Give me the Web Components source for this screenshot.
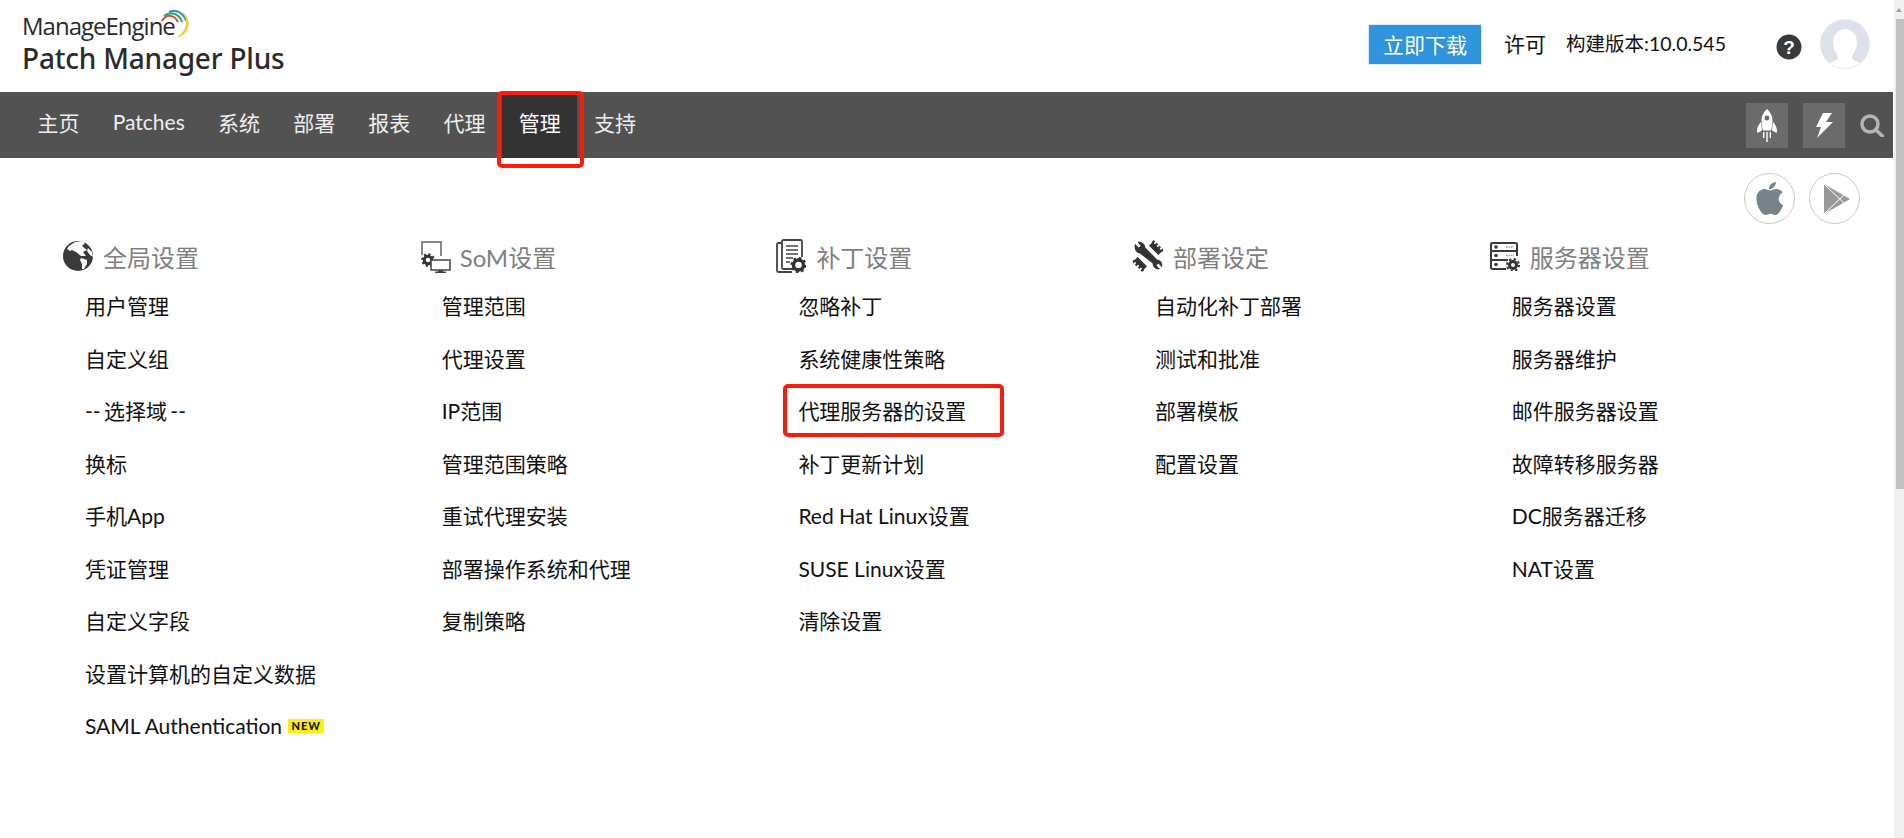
<!DOCTYPE html>
<html>
<head>
<meta charset="utf-8">
<title>Patch Manager Plus</title>
<style>
html,body{margin:0;padding:0;background:#fff;overflow:hidden;}
body{font-family:Lato,"Noto Sans CJK SC",sans-serif;}
</style>
</head>
<body>
<pm-app>
  <pm-header slot="header"></pm-header>
  <pm-nav slot="nav">
    <pm-nav-item>主页</pm-nav-item>
    <pm-nav-item>Patches</pm-nav-item>
    <pm-nav-item>系统</pm-nav-item>
    <pm-nav-item>部署</pm-nav-item>
    <pm-nav-item>报表</pm-nav-item>
    <pm-nav-item>代理</pm-nav-item>
    <pm-nav-item active>管理</pm-nav-item>
    <pm-nav-item>支持</pm-nav-item>
  </pm-nav>
  <pm-store-links slot="store"></pm-store-links>
  <pm-settings slot="settings">
    <pm-col heading="全局设置">
      <svg slot="icon" viewBox="0 0 30 30" width="30" height="30"><circle cx="15" cy="15" r="15" fill="#3a3a3a"/><path d="M6 5l6-4 7-1 3 2-3 3 5 4-4 2 3 4-5 0-5-4-4-2-2 1-3-2zM18 17l6 2 0 4-3 5-2 0 0-5-2-4zM25 7l4 4 1 5-3-2-3-4z" fill="#fff"/></svg>
      <pm-link>用户管理</pm-link><pm-link>自定义组</pm-link><pm-link><span style="word-spacing:-2px">-- 选择域 --</span></pm-link><pm-link>换标</pm-link><pm-link>手机App</pm-link><pm-link>凭证管理</pm-link><pm-link>自定义字段</pm-link><pm-link>设置计算机的自定义数据</pm-link><pm-link>SAML Authentication <pm-new></pm-new></pm-link>
    </pm-col>
    <pm-col heading="SoM设置">
      <svg slot="icon" viewBox="0 0 34 34" width="34" height="34" style="margin-left:-3px;margin-right:-1px"><path d="M5 16V3h19v14" fill="none" stroke="#666" stroke-width="1.5"/><circle cx="11" cy="21" r="3.800" fill="none" stroke="#333" stroke-width="3"/><circle cx="11" cy="21" r="5.800" fill="none" stroke="#333" stroke-width="2" stroke-dasharray="2.200 2.300"/><rect x="14" y="21" width="19" height="10" fill="#fff" stroke="#444" stroke-width="1.5"/><path d="M21 31h5v1.500h3V34H18v-1.500h3z" fill="#444"/></svg>
      <pm-link>管理范围</pm-link><pm-link>代理设置</pm-link><pm-link>IP范围</pm-link><pm-link>管理范围策略</pm-link><pm-link>重试代理安装</pm-link><pm-link>部署操作系统和代理</pm-link><pm-link>复制策略</pm-link>
    </pm-col>
    <pm-col heading="补丁设置">
      <svg slot="icon" viewBox="0 0 30 34" width="30" height="34"><path d="M6 4H2.500A1.500 1.500 0 0 0 1 5.500v26A1.500 1.500 0 0 0 2.500 33H16" fill="none" stroke="#444" stroke-width="1.800"/><path d="M16 30H7.500A1.500 1.500 0 0 1 6 28.500V2.500A1.500 1.500 0 0 1 7.500 1h17A1.500 1.500 0 0 1 26 2.500V18" fill="#fff" stroke="#444" stroke-width="1.800"/><path d="M10 7h12M10 11h12M10 15h12M10 19h7M10 23h4" stroke="#444" stroke-width="1.500"/><circle cx="22.500" cy="26" r="5" fill="none" stroke="#333" stroke-width="3.500"/><circle cx="22.500" cy="26" r="7" fill="none" stroke="#333" stroke-width="2.200" stroke-dasharray="2.600 2.900"/></svg>
      <pm-link>忽略补丁</pm-link><pm-link>系统健康性策略</pm-link><pm-link>代理服务器的设置</pm-link><pm-link>补丁更新计划</pm-link><pm-link>Red Hat Linux设置</pm-link><pm-link>SUSE Linux设置</pm-link><pm-link>清除设置</pm-link>
    </pm-col>
    <pm-col heading="部署设定">
      <svg slot="icon" viewBox="0 0 32 32" width="32" height="32"><path fill="#333" d="M2 3l4 4 2-2-3-4c4-1 8 2 8 6L26 20c3 0 6 3 5 8l-4-4-2 2 4 4c-5 1-8-2-8-6L7 13C3 13 1 8 2 3z"/><g fill="none" stroke="#333"><path d="M19 3l10 10M3 19l10 10" stroke-width="5.500"/><path d="M21 0l11 11M0 21l11 11" stroke-width="3" stroke-dasharray="2.500 1.800"/></g></svg>
      <pm-link>自动化补丁部署</pm-link><pm-link>测试和批准</pm-link><pm-link>部署模板</pm-link><pm-link>配置设置</pm-link>
    </pm-col>
    <pm-col heading="服务器设置">
      <svg slot="icon" viewBox="0 0 30 30" width="30" height="30"><path d="M16 28H2.500A1.500 1.500 0 0 1 1 26.500v-23A1.500 1.500 0 0 1 2.500 2h23A1.500 1.500 0 0 1 27 3.500V15" fill="none" stroke="#3a3a3a" stroke-width="2"/><path d="M1 10h26M1 19h17" stroke="#3a3a3a" stroke-width="2"/><circle cx="6" cy="6" r="1.800" fill="#3a3a3a"/><circle cx="6" cy="14.500" r="1.800" fill="#3a3a3a"/><circle cx="6" cy="23.500" r="1.800" fill="#3a3a3a"/><path d="M16 6h8M16 14.500h8" stroke="#999" stroke-width="1.500" stroke-dasharray="1.500 1"/><circle cx="23" cy="24" r="3.500" fill="none" stroke="#333" stroke-width="3"/><circle cx="23" cy="24" r="6" fill="none" stroke="#333" stroke-width="2" stroke-dasharray="2.300 2.400"/></svg>
      <pm-link>服务器设置</pm-link><pm-link>服务器维护</pm-link><pm-link>邮件服务器设置</pm-link><pm-link>故障转移服务器</pm-link><pm-link>DC服务器迁移</pm-link><pm-link>NAT设置</pm-link>
    </pm-col>
  </pm-settings>
  <pm-mark slot="marks" style="left:497px;top:91px;width:87px;height:77px"></pm-mark>
  <pm-mark slot="marks" style="left:783px;top:384px;width:221px;height:53px"></pm-mark>
</pm-app>

<script>
let def= (name, html)=> {
  customElements.define(name, class extends HTMLElement{
    constructor(){
      super();
      this.attachShadow({mode:"open"}).innerHTML= typeof html=="function" ? html(this) : html;
    }
  });
};

const CJK= `Lato,"Noto Sans CJK SC",sans-serif`;

def("pm-app", `<style>
:host{display:flex;width:1904px;height:838px;position:relative;overflow:hidden;background:#fff;}
main{width:1893px;flex:none;display:flex;flex-direction:column;}
aside{margin-left:1px;width:10px;background:#f0f0f0;position:relative;flex:none;}
.arrow{height:19px;display:flex;justify-content:center;align-items:center;}
.arrow i{display:block;border:3px solid transparent;border-bottom:4px solid #a3a3a3;border-top:0;}
.thumb{height:470px;margin-left:2px;background:#c1c1c1;}
</style>
<main>
<slot name="header"></slot>
<slot name="nav"></slot>
<slot name="store"></slot>
<slot name="settings"></slot>
</main>
<aside><div class="arrow"><i></i></div><div class="thumb"></div></aside>
<slot name="marks"></slot>`);

def("pm-mark", `<style>
:host{display:block;position:absolute;box-sizing:border-box;border:4px solid #ff1a0e;border-radius:5px;}
</style>`);

def("pm-header", `<style>
:host{display:flex;height:92px;align-items:flex-start;font-family:${CJK};color:#111;}
.logo{margin:10px 0 0 22px;position:relative;color:#2b2b2b;width:300px;}
.me{font:400 24px/30px "Open Sans",sans-serif;letter-spacing:-1px;height:30px;padding-top:1px;}
.me svg{position:absolute;left:137px;top:0;}
.pm{font:500 28px/34px "Noto Sans",sans-serif;letter-spacing:-.2px;white-space:nowrap;}
.right{margin-left:auto;display:flex;align-items:center;height:42px;margin-top:23px;}
.btn{width:114px;height:41px;background:#3095dc;color:#fff;font-size:21px;display:flex;align-items:center;justify-content:center;box-sizing:border-box;border:1px solid #dcebf7;}
.lic{margin:-3px 0 0 22px;font-size:21px;}
.ver{margin:-3px 0 0 20px;font-size:19.5px;}
.help{margin:5px 0 0 50px;}
.ava{margin:0 23px 0 18px;}
</style>
<div class="logo"><div class="me">ManageEngine<svg width="32" height="30" viewBox="0 0 32 30" fill="none"><path d="M3 11C7 4 15 4 19 12" stroke="#d9473a" stroke-width="2"/><path d="M5 6C11 1 20 3 23 12" stroke="#2fa866" stroke-width="2.200"/><path d="M10 2C17-1 25 3 27 11" stroke="#2b8fd0" stroke-width="2.200"/><path d="M22 1C29 5 32 14 28 20 26 24 22 27 17 28 23 24 27 19 27 13 27 8 25 4 22 1z" fill="#f4cf2e"/></svg></div><div class="pm">Patch Manager Plus</div></div>
<div class="right">
<div class="btn">立即下载</div>
<div class="lic">许可</div>
<div class="ver">构建版本:10.0.545</div>
<svg class="help" width="26" height="26" viewBox="0 0 26 26"><circle cx="13" cy="13" r="12.500" fill="#3a3a3a"/><text x="13" y="20" text-anchor="middle" fill="#fff" font-family="Liberation Sans" font-weight="700" font-size="19">?</text></svg>
<svg class="ava" width="50" height="50" viewBox="0 0 50 50"><defs><clipPath id="c"><circle cx="25" cy="25" r="24.500"/></clipPath></defs><circle cx="25" cy="25" r="24.500" fill="#fff"/><g clip-path="url(#c)"><path fill="#dce1ec" d="M0 0h50v50H44c0-8-12-7-12-12 0-2 5-7 5-14 0-9-6-14-12-14S13 15 13 24c0 7 5 12 5 14 0 5-12 4-12 12H0z"/></g><circle cx="25" cy="25" r="24.500" fill="none" stroke="#e6e8ee"/></svg>
</div>`);

def("pm-nav", `<style>
:host{display:flex;height:66px;background:#525252;padding-left:21px;align-items:stretch;}
.tools{margin-left:auto;display:flex;align-items:center;gap:15px;padding-right:9px;}
.tool{width:42px;height:45px;background:#6b6b6b;display:flex;align-items:center;justify-content:center;}
</style>
<slot></slot>
<div class="tools">
<div class="tool"><svg width="20" height="33" viewBox="0 0 20 33" fill="#fff"><path fill-rule="evenodd" d="M10 0c3.500 3 5.500 7 5.500 11.500 0 3.500-.5 7-1.500 10H6c-1-3-1.500-6.500-1.500-10C4.500 7 6.500 3 10 0zm0 6.500a2.500 2.500 0 1 0 0 5 2.500 2.500 0 0 0 0-5z"/><path d="M4 13c-2 2-4 5-4 9l.5 2 4.500-2.500zM16 13c2 2 4 5 4 9l-.5 2-4.500-2.500zM9.300 23h1.400v10H9.300zM6 23h1.400v6H6zM12.600 23H14v6h-1.400z"/></svg></div>
<div class="tool"><svg width="17" height="25" viewBox="0 0 17 25" fill="#fff"><path d="M7 0h9l-6 9h7L1 25l4-11H0z"/></svg></div>
<svg width="24" height="23" viewBox="0 0 24 23" fill="none" stroke="#b5b5b5"><circle cx="10" cy="10" r="8" stroke-width="3.500"/><path d="M16 16l6.500 6" stroke-width="3.500" stroke-linecap="round"/></svg>
</div>`);

def("pm-nav-item", `<style>
:host{display:flex;align-items:center;padding:0 16.600px 7px;color:#eee;font-size:21px;font-family:${CJK};white-space:nowrap;}
:host([active]){background:#333;color:#fff;}
</style><slot></slot>`);

def("pm-store-links", `<style>
:host{display:flex;justify-content:flex-end;gap:14px;padding:15px 33px 0 0;}
.c{width:51px;height:51px;border:1px solid #c9c9c9;border-radius:50%;box-sizing:border-box;display:flex;align-items:center;justify-content:center;}
</style>
<div class="c"><svg width="28" height="33" viewBox="0 0 28 34" fill="#76838b"><path d="M20 0c.3 3.500-3 7.500-7 7.500C12.600 4 16 .5 20 0zM23 17.500c0-3.500 2-5.500 4-7-1.500-2.200-4-3.300-6.500-3.300-2.800 0-4.800 1.500-6.300 1.500s-3.500-1.500-6-1.500C4 7.200 0 11 0 17c0 7 5 17 9.500 17 2 0 3-1.300 5-1.300s3 1.300 5 1.300c3.500 0 6.500-6 8-10-2.500-1-4.500-3.500-4.500-6.500z"/></svg></div>
<div class="c"><svg width="26" height="30" viewBox="0 0 26 30" style="margin-left:4px"><path d="M0 0l26 15L0 30z" fill="#999"/><path d="M0 0l20 19M0 30l20-19" stroke="#fff" stroke-width="1"/></svg></div>`);

def("pm-settings", `<style>
:host{display:grid;grid-template-columns:repeat(5,356.7px);padding:12px 0 0 63px;}
</style><slot></slot>`);

def("pm-col", self=> `<style>
:host{display:block;font-family:${CJK};}
h3{margin:0 0 3px;height:40px;display:flex;align-items:center;gap:10px;font-weight:400;font-size:24px;color:#808080;}
.i{width:30px;display:flex;justify-content:flex-start;}
</style>
<h3><span class="i"><slot name="icon"></slot></span>${self.getAttribute("heading")||""}</h3>
<slot></slot>`);

def("pm-link", `<style>
:host{display:flex;align-items:center;height:52.5px;padding-left:22px;font-size:21px;color:#111;font-family:${CJK};white-space:pre;}
</style><slot></slot>`);

def("pm-new", `<style>
:host{display:inline-block;background:#fff200;color:#111;font:900 11px/14px Lato,sans-serif;letter-spacing:1px;padding:0 3px;height:14px;margin-left:1px;margin-top:2px;}
</style>NEW`);
</script>
</body>
</html>
